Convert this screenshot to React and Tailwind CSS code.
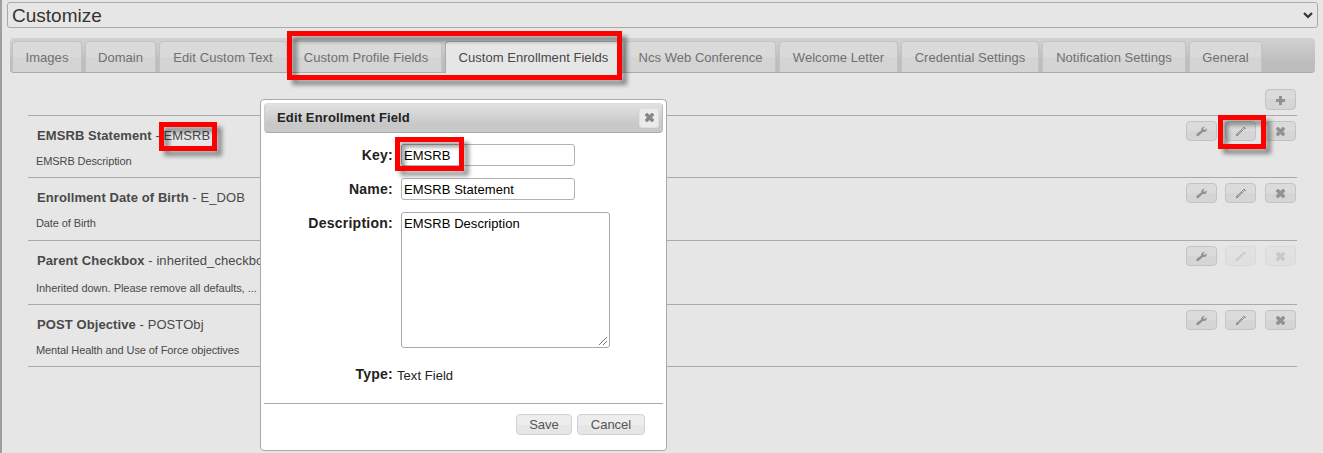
import React from "react";

const tabs = [
  { label: "Images", cls: "w-[70px]" },
  { label: "Domain", cls: "w-[71px]" },
  { label: "Edit Custom Text", cls: "w-[128px] tracking-[0.1px]" },
  { label: "Custom Profile Fields", cls: "w-[152px]" },
  { label: "Custom Enrollment Fields", cls: "w-[177px]", active: true },
  { label: "Ncs Web Conference", cls: "w-[151px]" },
  { label: "Welcome Letter", cls: "w-[119px]" },
  { label: "Credential Settings", cls: "w-[138px]" },
  { label: "Notification Settings", cls: "w-[144px]" },
  { label: "General", cls: "w-[73px]" },
];

const rows = [
  { name: "EMSRB Statement", id: "EMSRB", text: "EMSRB Description", h: "h-[62px]" },
  { name: "Enrollment Date of Birth", id: "E_DOB", text: "Date of Birth", h: "h-[63px]" },
  { name: "Parent Checkbox", id: "inherited_checkbox", text: "Inherited down. Please remove all defaults, ...", h: "h-[64px]", locked: true, gap: "mt-[12px]", spacing: "tracking-[-0.04px]" },
  { name: "POST Objective", id: "POSTObj", text: "Mental Health and Use of Force objectives", h: "h-[62px]" },
];

function Icon({ kind }) {
  return (
    <svg width="11" height="11" viewBox="0 0 11 11" fill="currentColor" className="shrink-0">
      {kind === "plus" && <path d="M4 1h3v3h3v3H7v3H4V7H1V4h3z" />}
      {kind === "close" && <path d="M1 2.500 2.500 1h1L5.500 3l2-2h1L10 2.500v1L8 5.500l2 2v1L8.500 10h-1l-2-2-2 2h-1L1 8.500v-1l2-2-2-2z" />}
      {kind === "wrench" && <path d="M9 .8 7.400 2.200l.1 1.400 1.500.2L10.700 2.300c.4 1.500-.2 2.800-1.300 3.400-.9.500-1.800.5-2.600.3L2.700 9.800c-.6.600-1.600.5-2.100 0-.5-.6-.4-1.400.2-2l4.300-3.400C4.900 2.200 6.700.5 9 .8z" />}
      {kind === "pencil" && (
        <>
          <path d="M1 10V8h1V7h1V6h1V5h1V4h1V3h1v1h1v1H7v1H6v1H5v1H4v1H3v1zM7 2h1v1h1v1H8V3H7zM8 1h2v1h1v1H9V2H8z" />
          <path d="M3 8 6.500 4.500" stroke="#d8d8d8" strokeWidth=".5" />
        </>
      )}
    </svg>
  );
}

function IconButton({ kind, locked, tall }) {
  return (
    <button
      className={
        "flex w-[31px] items-center justify-center rounded-[4px] border border-[#c3c3c3] bg-linear-to-b from-[#dbdbdb] from-50% to-[#d5d5d5] to-50% text-[#929292] " +
        (tall ? "h-[21px] pt-px " : "h-5 ") +
        (locked ? "opacity-35" : "")
      }
    >
      <Icon kind={kind} />
    </button>
  );
}

function Highlight({ place }) {
  return (
    <div className={"pointer-events-none absolute z-20 border-[5px] border-[#fe0000] drop-shadow-[5px_5px_2px_rgba(0,0,0,0.4)] " + place} />
  );
}

function Field({ label, children, cls }) {
  return (
    <div className={"flex items-start " + cls}>
      <div className="mt-[3px] w-[129px] shrink-0 text-right text-[14px] leading-4 font-bold tracking-[0.25px] text-[#222]">{label}</div>
      {children}
    </div>
  );
}

function Dialog() {
  return (
    <div className="absolute top-[99px] left-[260px] z-10 flex h-[352px] w-[407px] flex-col rounded-[4px] border border-[#aaa] bg-white p-[3px]">
      <div className="flex h-[30px] shrink-0 items-center justify-between rounded-[4px] border border-t-[#ddd] border-r-[#bbb] border-b-[#aaa] border-l-[#ccc] bg-linear-to-b from-[#e2e2e2] to-[#c8c8c8] to-70% pr-[3px] pl-[12px]">
        <h2 className="text-[13px] leading-4 font-bold tracking-[0.14px] text-[#222]">Edit Enrollment Field</h2>
        <button className="-mt-px flex h-5 w-5 items-center justify-center rounded-[3px] border border-[#e0e0e0] bg-[#ebebeb] text-[#888]">
          <Icon kind="close" />
        </button>
      </div>
      <div className="flex flex-col pt-[11px] text-[13px] tracking-[0.05px] text-black">
        <Field label="Key:" cls="h-[34px]">
          <div className="ml-[8px] flex h-[22px] w-[174px] items-center rounded-[3px] border border-[#b3b3b3] pt-px pl-[2px]">EMSRB</div>
        </Field>
        <Field label="Name:" cls="h-[34px]">
          <div className="ml-[8px] flex h-[22px] w-[174px] items-center rounded-[3px] border border-[#b3b3b3] pt-px pl-[2px]">EMSRB Statement</div>
        </Field>
        <Field label="Description:" cls="h-[151px]">
          <div className="ml-[8px] flex h-[136px] w-[209px] items-end justify-between rounded-[3px] border border-[#aaa] pl-[2px]">
            <span className="self-start pt-[3px] leading-4">EMSRB Description</span>
            <svg width="10" height="10" viewBox="0 0 10 10" className="mr-px mb-px" stroke="#777" fill="none">
              <path d="M1 9 9 1M5 9l4-4" />
            </svg>
          </div>
        </Field>
        <Field label="Type:" cls="h-[40px]">
          <span className="mt-[5px] ml-1 leading-4 text-[#222]">Text Field</span>
        </Field>
      </div>
      <div className="flex justify-end gap-[5px] border-t border-[#aaa] pt-[10px] pr-[18px] text-[13px] text-[#555]">
        <button className="h-[21px] w-[56px] rounded-[4px] border border-[#d1d1d1] bg-linear-to-b from-[#ededed] from-50% to-[#e6e6e6] to-50% leading-[19px]">Save</button>
        <button className="h-[21px] w-[68px] rounded-[4px] border border-[#d1d1d1] bg-linear-to-b from-[#ededed] from-50% to-[#e6e6e6] to-50% leading-[19px]">Cancel</button>
      </div>
    </div>
  );
}

export default function App() {
  return (
    <div className="relative h-[453px] w-[1323px] overflow-hidden border-l-2 border-[#9f9f9f] bg-[#e6e6e6] font-['Liberation_Sans',Arial,sans-serif] text-[#494949]">
      <div className="mt-[2px] ml-[5px] flex h-[26px] w-[1311px] items-center justify-between rounded-[3px] border border-[#aaa] pr-[4px] pl-[4px]">
        <span className="pt-px text-[19px] leading-6 text-[#333]">Customize</span>
        <svg width="10" height="8" viewBox="0 0 10 8" fill="none" stroke="#333" strokeWidth="2.200">
          <path d="m1 2 4 4 4-4" />
        </svg>
      </div>

      <nav className="mt-[10px] ml-[8px] flex h-[35px] w-[1305px] items-end gap-[3px] rounded-[4px] border-b border-[#aaa] bg-linear-to-b from-[#d2d2d2] to-[#bdbdbd] to-70% pl-[2px] text-[13px] tracking-[0.04px]">
        {tabs.map((t) => (
          <div
            key={t.label}
            className={
              "flex items-center justify-center rounded-t-[4px] border-x border-t whitespace-nowrap " +
              t.cls +
              (t.active
                ? " -mb-px h-[32px] border-[#aaa] bg-[#e6e6e6] text-[#474747]"
                : " h-[31px] border-[#c3c3c3] bg-linear-to-b from-[#dadada] from-50% to-[#d4d4d4] to-50% pt-px text-[#707070]")
            }
          >
            {t.label}
          </div>
        ))}
      </nav>

      <main className="ml-[26px] w-[1269px]">
        <div className="flex h-[42px] justify-end pt-[16px] pr-px">
          <IconButton kind="plus" tall />
        </div>
        {rows.map((r) => (
          <div key={r.id} className={"flex justify-between border-t border-[#aaa] pr-px " + r.h}>
            <div className="pt-[12px] pl-[9px]">
              <p className="text-[13px] leading-4 tracking-[0.09px]">
                <b>{r.name}</b> - {r.id}
              </p>
              <p className={"-ml-px text-[11px] leading-[14px] " + (r.spacing || "tracking-[-0.1px]") + " " + (r.gap || "mt-[10px]")}>{r.text}</p>
            </div>
            <div className="flex items-start pt-[5px]">
              <IconButton kind="wrench" />
              <span className="w-2" />
              <IconButton kind="pencil" locked={r.locked} />
              <span className="w-[9px]" />
              <IconButton kind="close" locked={r.locked} />
            </div>
          </div>
        ))}
        <div className="border-t border-[#aaa]" />
      </main>

      <div className="absolute inset-0 -left-[2px]">
        <Dialog />
        <Highlight place="top-[31px] left-[287px] h-[49px] w-[335px]" />
        <Highlight place="top-[122px] left-[159px] h-[29px] w-[58px]" />
        <Highlight place="top-[137px] left-[395px] h-[34px] w-[69px]" />
        <Highlight place="top-[115px] left-[1218px] h-[34px] w-[48px]" />
      </div>
    </div>
  );
}
